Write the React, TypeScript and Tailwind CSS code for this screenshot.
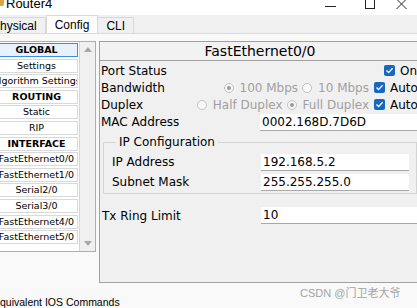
import React from "react";

const Radio = ({ on }: { on?: boolean }) => (
  <span className="w-[10px] h-[10px] rounded-full border border-[#c2c2c2] bg-[#f8f8f8] flex items-center justify-center shrink-0">
    {on && <span className="w-[4px] h-[4px] rounded-full bg-[#9a9a9a]" />}
  </span>
);

const Check = () => (
  <span className="w-[11px] h-[11px] rounded-[2px] bg-[#1667c2] flex items-center justify-center shrink-0">
    <svg width="9" height="9" viewBox="0 0 9 9">
      <path d="M1.5 4.6 L3.6 6.6 L7.6 2.2" stroke="white" strokeWidth="1.4" fill="none" />
    </svg>
  </span>
);

const items: { t: string; h?: boolean; sel?: boolean }[] = [
  { t: "GLOBAL", h: true, sel: true },
  { t: "Settings" },
  { t: "Algorithm Settings" },
  { t: "ROUTING", h: true },
  { t: "Static" },
  { t: "RIP" },
  { t: "INTERFACE", h: true },
  { t: "FastEthernet0/0" },
  { t: "FastEthernet1/0" },
  { t: "Serial2/0" },
  { t: "Serial3/0" },
  { t: "FastEthernet4/0" },
  { t: "FastEthernet5/0" },
];

export default function App() {
  return (
    <div className="relative w-[417px] h-[308px] overflow-hidden bg-white flex flex-col font-['DejaVu_Sans',sans-serif] text-black">
      {/* title bar */}
      <div className="h-[15px] flex items-start shrink-0 font-['Liberation_Sans',sans-serif]">
        <div className="w-[4px] h-[6px] bg-[#d9a441] rounded-br-[2px]" />
        <span className="ml-[2px] mt-[-3px] text-[13px] leading-[13px]">Router4</span>
        <div className="ml-auto mt-[6px] w-[11px] h-[1px] bg-[#222]" />
        <div className="ml-[29px] mt-[-2px] w-[10px] h-[11px] border border-[#222]" />
        <svg className="ml-[21px] mt-[-1px]" width="11" height="10" viewBox="0 0 11 10">
          <path d="M0.5 0 L10.5 10 M10.5 0 L0.5 10" stroke="#222" strokeWidth="1" />
        </svg>
        <div className="w-[10px]" />
      </div>
      {/* tabs */}
      <div className="h-[18px] shrink-0 bg-[#f0f0f0] flex items-end font-['Liberation_Sans',sans-serif] text-[12px]">
        <div className="ml-[-15px] h-[16px] pl-[6px] pr-[8px] border border-b-0 border-[#d9d9d9] flex items-center leading-none">Physical</div>
        <div className="h-[18px] px-[8px] bg-white border border-b-0 border-[#d9d9d9] flex items-center leading-none">Config</div>
        <div className="h-[16px] px-[8px] border border-b-0 border-l-0 border-[#d9d9d9] flex items-center leading-none">CLI</div>
      </div>
      {/* content */}
      <div className="flex-1 bg-[#f9f9f9] border-t border-[#dadada] flex flex-col">
        <div className="flex pt-[7px]">
          {/* left list */}
          <div className="ml-[-6px] w-[102px] h-[211px] border border-[#adadad] bg-white flex shrink-0">
            <div className="w-[84px] pt-[1px] pr-[1px] flex flex-col gap-[1.6px]">
              {items.map((it) => (
                <div
                  key={it.t}
                  className={
                    "h-[14px] border flex items-center justify-center overflow-hidden whitespace-nowrap text-[9.5px] leading-[12px] " +
                    (it.sel ? "border-[#3d8ee0] bg-[#e8f2fc] " : "border-[#d9d9d9] bg-white ") +
                    (it.h ? "font-bold" : "")
                  }
                >
                  {it.t}
                </div>
              ))}
            </div>
            <div className="w-[16px] border-l border-[#d6d6d6] bg-[#f0f0f0] flex flex-col items-center justify-between py-[5px]">
              <svg width="8" height="5" viewBox="0 0 8 5"><path d="M0 5 L4 0 L8 5 Z" fill="#a6a6a6" /></svg>
              <svg width="8" height="5" viewBox="0 0 8 5"><path d="M0 0 L8 0 L4 5 Z" fill="#a6a6a6" /></svg>
            </div>
          </div>
          {/* right panel */}
          <div className="ml-[3px] w-[322px] h-[242px] border border-[#a0a0a0] bg-[#f0f0f0] flex flex-col shrink-0 text-[12px]">
            <div className="h-[19px] border-b border-[#a0a0a0] bg-[#f2f2f2] flex items-center justify-center text-[14px] leading-none">
              FastEthernet0/0
            </div>
            <div className="pt-[1px] flex flex-col">
              <div className="h-[17px] pl-[1px] flex items-center">
                <span>Port Status</span>
                <div className="ml-auto flex items-center">
                  <Check />
                  <span className="ml-[5px] w-[20px] overflow-hidden whitespace-nowrap">On</span>
                </div>
              </div>
              <div className="h-[17px] pl-[1px] flex items-center">
                <span>Bandwidth</span>
                <div className="ml-auto flex items-center text-[#a0a0a0] whitespace-nowrap">
                  <Radio on />
                  <span className="ml-[6px]">100 Mbps</span>
                  <span className="ml-[4px]"><Radio /></span>
                  <span className="ml-[6px]">10 Mbps</span>
                  <span className="ml-[5px]"><Check /></span>
                  <span className="ml-[5px] w-[30px] overflow-hidden text-black">Auto</span>
                </div>
              </div>
              <div className="h-[17px] pl-[1px] flex items-center">
                <span>Duplex</span>
                <div className="ml-auto flex items-center text-[#a0a0a0] whitespace-nowrap">
                  <Radio />
                  <span className="ml-[6px]">Half Duplex</span>
                  <span className="ml-[4px]"><Radio on /></span>
                  <span className="ml-[6px]">Full Duplex</span>
                  <span className="ml-[5px]"><Check /></span>
                  <span className="ml-[5px] w-[30px] overflow-hidden text-black">Auto</span>
                </div>
              </div>
              <div className="h-[18px] pl-[1px] flex items-center">
                <span className="w-[159px] shrink-0">MAC Address</span>
                <div className="w-[170px] h-[17px] bg-white border-b border-[#a8a8a8] pl-[2px] flex items-center shrink-0">0002.168D.7D6D</div>
              </div>
              <fieldset className="mx-[3px] mt-[4px] border border-[#d4d4d4] pt-[3px] pb-[1px] pl-[8px]">
                <legend className="ml-[4px] px-[3px] leading-[14px]">IP Configuration</legend>
                <div className="h-[20px] flex items-center">
                  <span className="w-[149px] shrink-0">IP Address</span>
                  <div className="w-[148px] h-[17px] bg-white border-b border-[#a8a8a8] pl-[2px] flex items-center">192.168.5.2</div>
                </div>
                <div className="h-[20px] flex items-center">
                  <span className="w-[149px] shrink-0">Subnet Mask</span>
                  <div className="w-[148px] h-[17px] bg-white border-b border-[#a8a8a8] pl-[2px] flex items-center">255.255.255.0</div>
                </div>
              </fieldset>
              <div className="mt-[12px] h-[19px] pl-[2px] flex items-center">
                <span className="w-[159px] shrink-0">Tx Ring Limit</span>
                <div className="w-[170px] h-[17px] bg-white border-b border-[#a8a8a8] pl-[2px] flex items-center shrink-0">10</div>
              </div>
            </div>
          </div>
        </div>
        <div className="mt-[13px] ml-[-7px] text-[10.5px] leading-[12px] whitespace-nowrap font-['Liberation_Sans',sans-serif]">Equivalent IOS Commands</div>
      </div>
      <div className="absolute left-[300px] top-[287px] text-[11px] leading-[13px] text-[#a3a3a3] whitespace-nowrap font-['Liberation_Sans','Noto_Sans_CJK_SC',sans-serif]">
        CSDN @门卫老大爷
      </div>
    </div>
  );
}
